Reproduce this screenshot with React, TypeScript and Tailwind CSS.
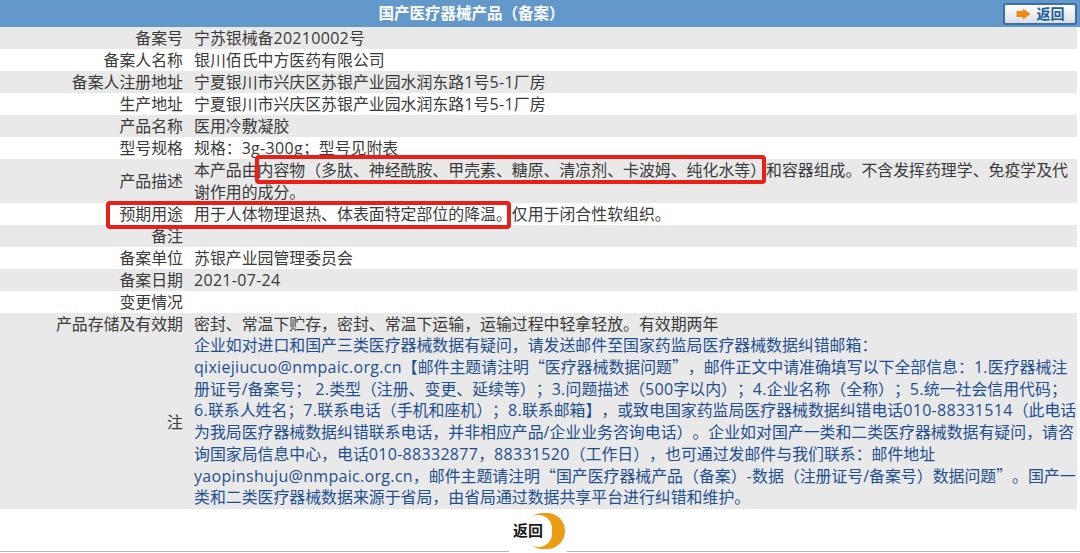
import React from "react";

const font = "font-['Open_Sans','Noto_Sans_CJK_SC',sans-serif]";

type Row = { label: string; value?: string[] };

const rows: Row[] = [
  { label: "备案号", value: ["宁苏银械备20210002号"] },
  { label: "备案人名称", value: ["银川佰氏中方医药有限公司"] },
  { label: "备案人注册地址", value: ["宁夏银川市兴庆区苏银产业园水润东路1号5-1厂房"] },
  { label: "生产地址", value: ["宁夏银川市兴庆区苏银产业园水润东路1号5-1厂房"] },
  { label: "产品名称", value: ["医用冷敷凝胶"] },
  { label: "型号规格", value: ["规格：3g-300g；型号见附表"] },
  {
    label: "产品描述",
    value: ["本产品由内容物（多肽、神经酰胺、甲壳素、糖原、清凉剂、卡波姆、纯化水等）和容器组成。不含发挥药理学、免疫学及代", "谢作用的成分。"],
  },
  { label: "预期用途", value: ["用于人体物理退热、体表面特定部位的降温。仅用于闭合性软组织。"] },
  { label: "备注" },
  { label: "备案单位", value: ["苏银产业园管理委员会"] },
  { label: "备案日期", value: ["2021-07-24"] },
  { label: "变更情况" },
  { label: "产品存储及有效期", value: ["密封、常温下贮存，密封、常温下运输，运输过程中轻拿轻放。有效期两年"] },
];

const notes = [
  "企业如对进口和国产三类医疗器械数据有疑问，请发送邮件至国家药监局医疗器械数据纠错邮箱：",
  "qixiejiucuo@nmpaic.org.cn【邮件主题请注明“医疗器械数据问题”，邮件正文中请准确填写以下全部信息：1.医疗器械注",
  "册证号/备案号； 2.类型（注册、变更、延续等）；3.问题描述（500字以内）；4.企业名称（全称）；5.统一社会信用代码；",
  "6.联系人姓名；7.联系电话（手机和座机）；8.联系邮箱】，或致电国家药监局医疗器械数据纠错电话010-88331514（此电话",
  "为我局医疗器械数据纠错联系电话，并非相应产品/企业业务咨询电话）。企业如对国产一类和二类医疗器械数据有疑问，请咨",
  "询国家局信息中心，电话010-88332877，88331520（工作日），也可通过发邮件与我们联系：邮件地址",
  "yaopinshuju@nmpaic.org.cn，邮件主题请注明“国产医疗器械产品（备案）-数据（注册证号/备案号）数据问题”。国产一",
  "类和二类医疗器械数据来源于省局，由省局通过数据共享平台进行纠错和维护。",
];

// latin runs are a bit wider than Open Sans; curly quotes come from the CJK font
function renderText(text: string) {
  return text.split(/([A-Za-z0-9@.\-]+|[“”])/).map((part, i) => {
    if (part === "“" || part === "”") {
      return <span key={i} className="font-['Noto_Sans_CJK_SC',sans-serif] leading-none">{part}</span>;
    }
    if (/^[A-Za-z0-9@.\-]+$/.test(part)) {
      return <span key={i} className="text-[16px] tracking-[0.3px]">{part}</span>;
    }
    return part;
  });
}

function Line({ children, className = "h-[22px] leading-[22px]" }: { children: React.ReactNode; className?: string }) {
  return <div className={`whitespace-nowrap ${className}`}>{children}</div>;
}

export default function App() {
  return (
    <div className={`relative w-[1080px] h-[553px] overflow-hidden bg-white text-[15.9px] text-[#3a3a3a] [text-spacing-trim:space-all] ${font}`}>
      <div className="flex h-[27px] items-center bg-[#6398cb]">
        <div className="flex-1 pr-[60px] text-center text-[15.5px] font-bold text-white">国产医疗器械产品（备案）</div>
        <button className="mr-[3px] flex h-[22px] w-[74px] items-center justify-center gap-[6px] rounded-[3px] border-2 border-[#3c6fa6] bg-gradient-to-b from-white to-[#d9dde2] text-[14px] font-bold text-[#1d5c9c]">
          <svg width="15" height="12" viewBox="0 0 15 12">
            <path d="M0.5 3h6.5V0.5L14.5 6 7 11.5V9H0.5z" fill="#f08a14" />
          </svg>
          返回
        </button>
      </div>

      <div className="w-[1077px]">
        {rows.map((row, i) => (
          <div key={row.label} className={`flex ${i % 2 === 0 ? "bg-[#e9e9e9]" : "bg-white"}`}>
            <div className="flex w-[183px] shrink-0 items-center justify-end">
              <Line>{row.label}</Line>
            </div>
            <div className="min-h-[22px] pl-[11px]">
              {row.value?.map((t) => <Line key={t}>{renderText(t)}</Line>)}
            </div>
          </div>
        ))}
        <div className="flex bg-[#e9e9e9]">
          <div className="flex w-[183px] shrink-0 items-center justify-end">
            <Line>注</Line>
          </div>
          <div className="pl-[11px] text-[#1f4f8f]">
            {notes.map((t) => <Line key={t} className="h-[21.75px] leading-[21.75px]">{renderText(t)}</Line>)}
          </div>
        </div>
      </div>

      <div className="flex h-[44px] items-end">
        <div className="mb-[1px] h-[1px] w-[509px] bg-[#b5b5b5]" />
        <div className="relative h-[44px] w-[58px]">
          <div className="absolute left-[16px] top-[4px] h-[36px] w-[40px] rounded-full bg-[#eb9c12]" />
          <div className="absolute left-[16px] top-[6px] h-[32px] w-[27px] rounded-full bg-white" />
          <div className="absolute left-[4px] top-[10px] text-[15px] leading-[22px] font-bold text-[#1a1a1a]">返回</div>
        </div>
        <div className="mb-[1px] h-[1px] flex-1 bg-[#b5b5b5]" />
      </div>

      <div className="absolute left-[255px] top-[155px] h-[29px] w-[511px] rounded-[4px] border-4 border-[#ea1f17]" />
      <div className="absolute left-[106px] top-[201px] h-[28px] w-[405px] rounded-[4px] border-4 border-[#ea1f17]" />
    </div>
  );
}
